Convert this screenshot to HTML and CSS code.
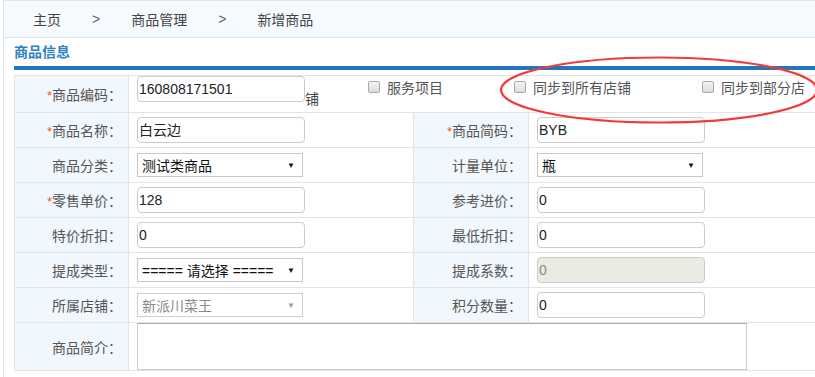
FILE: index.html
```html
<!DOCTYPE html>
<html>
<head>
<meta charset="utf-8">
<link rel="stylesheet" href="styles.css">
</head>
<body>
<div class="page">
  <div class="crumbs">
    <span>主页</span><span class="sep">&gt;</span><span>商品管理</span><span class="sep">&gt;</span><span>新增商品</span>
  </div>
  <div class="content">
    <h2 class="title">商品信息</h2>
    <table class="form">
      <colgroup><col class="c1"><col class="c2"><col class="c3"><col class="c4"></colgroup>
      <tr class="r1">
        <th><i>*</i>商品编码：</th>
        <td colspan="3">
          <div class="first">
            <span class="inp">160808171501</span><span class="pu">铺</span>
            <label class="chk c-a"><b></b>服务项目</label>
            <label class="chk c-b"><b></b>同步到所有店铺</label>
            <label class="chk c-c"><b></b>同步到部分店</label>
          </div>
        </td>
      </tr>
      <tr>
        <th><i>*</i>商品名称：</th><td><span class="inp">白云边</span></td>
        <th><i>*</i>商品简码：</th><td><span class="inp">BYB</span></td>
      </tr>
      <tr>
        <th>商品分类：</th><td><span class="sel">测试类商品<em>▼</em></span></td>
        <th>计量单位：</th><td><span class="sel">瓶<em>▼</em></span></td>
      </tr>
      <tr>
        <th><i>*</i>零售单价：</th><td><span class="inp">128</span></td>
        <th>参考进价：</th><td><span class="inp">0</span></td>
      </tr>
      <tr>
        <th>特价折扣：</th><td><span class="inp">0</span></td>
        <th>最低折扣：</th><td><span class="inp">0</span></td>
      </tr>
      <tr>
        <th>提成类型：</th><td><span class="sel">===== 请选择 =====<em>▼</em></span></td>
        <th>提成系数：</th><td><span class="inp dis">0</span></td>
      </tr>
      <tr>
        <th>所属店铺：</th><td><span class="sel sdis">新派川菜王<em>▼</em></span></td>
        <th>积分数量：</th><td><span class="inp">0</span></td>
      </tr>
      <tr class="rt">
        <th>商品简介：</th><td colspan="3"><span class="ta"></span></td>
      </tr>
    </table>
  </div>
  <svg class="ring" width="340" height="80" viewBox="0 0 340 80"><ellipse cx="160" cy="36" rx="158" ry="32.5" fill="none" stroke="#f23a3a" stroke-width="2.2"/></svg>
</div>
</body>
</html>
```
FILE: styles.css
```css
* { box-sizing: border-box; }
html, body { margin: 0; padding: 0; background: #fff; }
body { font-family: "Liberation Sans", Arial, "Noto Sans CJK SC", sans-serif; font-size: 13px; color: #555; width: 815px; height: 377px; overflow: hidden; }
.page { position: relative; margin-left: 3px; border-left: 1px solid #dde3ea; height: 377px; }
.crumbs { height: 38px; background: #f5faff; border-top: 1px solid #e2e6ea; border-bottom: 1px solid #dcdfe3; display: flex; align-items: center; padding-left: 29px; font-size: 14px; color: #444; }
.crumbs .sep { margin: 0 31px 0 31px; color: #666; font-size: 14px; }
.content { padding-left: 10px; }
.title { margin: 0; height: 32px; padding-top: 5px; font-size: 14px; font-weight: bold; color: #2b7fc3; border-bottom: 4px solid #2277bb; line-height: 18px; padding-left: 0; }
.form { border-collapse: collapse; table-layout: fixed; width: 801px; margin-top: 5px; }
.c1 { width: 114px; } .c2 { width: 285px; } .c3 { width: 115px; } .c4 { width: 287px; }
.form th, .form td { border: 1px solid #e2e5e8; padding: 0; height: 35px; }
.form th { background: #f0f7fd; font-weight: normal; text-align: right; padding-right: 6px; color: #555; white-space: nowrap; font-size: 14px; }
.form td { padding-left: 8px; background: #fff; }
.form th i { font-style: normal; color: #f05a1a; font-size: 13px; }
.r1 th, .r1 td { height: 37px; }
.rt th, .rt td { height: 48px; }
.inp { display: block; width: 168px; height: 26px; border: 1px solid #ccc; border-radius: 4px; padding-left: 1px; line-height: 24px; color: #222; background: #fff; font-size: 14px; }
.inp.dis { background: #ebebe4; color: #888; }
.sel { display: flex; justify-content: space-between; align-items: center; width: 166px; height: 24px; border: 1px solid #c8c8c8; padding: 0 7px 0 4px; color: #111; font-size: 14px; background: #fff; }
.sel em { font-style: normal; font-size: 8px; color: #111; }
.sel.sdis { color: #8a8a8a; border-color: #d0d0d0; }
.sel.sdis em { color: #999; }
.ta { display: block; width: 610px; height: 47px; border: 1px solid #ccc; border-top-color: #aaa; background: #fff; }
.first { display: flex; align-items: flex-start; height: 36px; position: relative; }
.pu { font-size: 14px; color: #444; margin-top: 14px; line-height: 18px; }
.chk { display: flex; align-items: center; color: #555; font-size: 14px; margin-top: 2px; height: 18px; }
.chk b { display: inline-block; width: 12px; height: 12px; border: 1px solid #a9a9a9; border-radius: 2px; background: linear-gradient(#f4f4f4, #dcdcdc); margin-right: 7px; }
.c-a { margin-left: 49px; }
.c-b { margin-left: 71px; }
.c-c { margin-left: 71px; white-space: nowrap; }
.ring { position: absolute; left: 495px; top: 54px; overflow: visible; }
```
